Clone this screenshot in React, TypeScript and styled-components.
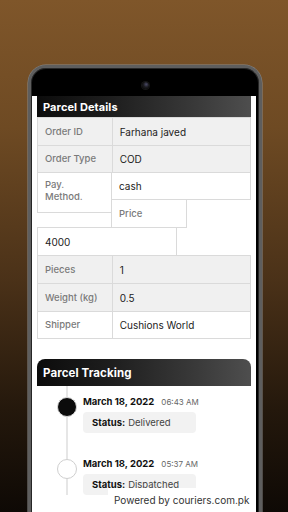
import React from "react";
import styled, { createGlobalStyle } from "styled-components";

const GlobalStyle = createGlobalStyle`
  html, body { margin: 0; padding: 0; }
  body { width: 288px; height: 512px; overflow: hidden; font-family: Inter, "Noto Sans", "DejaVu Sans", sans-serif; }
  * { box-sizing: border-box; }
`;

const Page = styled.div`
  position: relative;
  width: 288px;
  height: 512px;
  overflow: hidden;
  background: linear-gradient(180deg, #7f562a 0%, #6e4a23 25%, #4a3118 55%, #24180c 80%, #0e0905 100%);
  padding: 65px 26px 0 28px;
`;

const Phone = styled.div`
  position: relative;
  width: 234px;
  height: 470px;
  background: #000;
  border: 3px solid #5e5e5e;
  border-bottom: none;
  border-radius: 18px 18px 0 0;
  box-shadow: inset 0 0 0 1px #262626, 0 0 0 0.5px #8a8a8a;
  padding: 0 3px 0 1px;
  overflow: hidden;
`;

const SpeakerSlot = styled.div`
  position: absolute;
  top: -3px;
  left: 82px;
  width: 62px;
  height: 2px;
  border-radius: 1px;
  background: #353535;
`;

const StatusBar = styled.div`
  height: 28px;
  display: flex;
  align-items: flex-start;
  justify-content: center;
  padding: 14px 0 0 2px;
`;

const Camera = styled.div`
  width: 7px;
  height: 7px;
  border-radius: 50%;
  background: radial-gradient(circle at 60% 35%, #4a4a66 0%, #1a1a1e 45%, #0a0a0a 100%);
  box-shadow: 0 0 0 1px #161616;
`;

const Screen = styled.div`
  position: relative;
  height: 416px;
  background: #fff;
  padding: 0 5px;
  overflow: hidden;
`;

const SectionHeader = styled.div<{ $rounded?: boolean }>`
  height: ${(p) => (p.$rounded ? 27 : 21)}px;
  display: flex;
  align-items: center;
  padding-left: 6px;
  color: #fff;
  font-weight: 700;
  font-size: ${(p) => (p.$rounded ? 11.5 : 11)}px;
  letter-spacing: 0.1px;
  background: linear-gradient(90deg, #0c0c0c 0%, #1e1e1e 35%, #3a3a3a 75%, #4e4e4e 100%);
  border-radius: ${(p) => (p.$rounded ? "8px 8px 0 0" : "0")};
`;

const Table = styled.div`
  padding: 1px 0 0 1px;
`;

const Row = styled.div`
  display: flex;
  align-items: flex-start;
`;

const Column = styled.div`
  display: flex;
  flex-direction: column;
`;

const Cell = styled.div<{ $w: number; $h: number; $shade?: boolean; $label?: boolean; $top?: boolean }>`
  width: ${(p) => p.$w}px;
  height: ${(p) => p.$h}px;
  margin: -1px 0 0 -1px;
  border: 1px solid #dadada;
  background: ${(p) => (p.$shade ? "#f0f0f0" : "#fff")};
  display: flex;
  align-items: ${(p) => (p.$top ? "flex-start" : "center")};
  padding: ${(p) => (p.$top ? "6px 7px 0" : "0 7px")};
  font-size: ${(p) => (p.$label ? 9.5 : 10)}px;
  line-height: 12px;
  color: ${(p) => (p.$label ? "#7a7a7a" : "#222")};
  font-weight: ${(p) => (p.$label ? 500 : 400)};
`;

const TrackingSection = styled.div`
  margin-top: 20px;
`;

const Timeline = styled.div`
  position: relative;
  padding-top: 10px;
  &::before {
    content: "";
    position: absolute;
    left: 29px;
    top: 0;
    bottom: 0;
    width: 1.5px;
    background: #e6e6e6;
  }
`;

const Item = styled.div`
  position: relative;
  display: grid;
  grid-template-columns: 46px 1fr;
  margin-bottom: 25px;
`;

const Dot = styled.div<{ $filled?: boolean }>`
  margin: 1px 0 0 20px;
  width: 20px;
  height: 20px;
  border-radius: 50%;
  background: ${(p) => (p.$filled ? "#0b0b0b" : "#fff")};
  border: 1px solid ${(p) => (p.$filled ? "#d8d8d8" : "#cfcfcf")};
`;

const Info = styled.div`
  display: flex;
  flex-direction: column;
  gap: 4px;
`;

const DateLine = styled.div`
  display: flex;
  align-items: baseline;
  gap: 7px;
  line-height: 12px;
  height: 12px;
`;

const DateText = styled.span`
  font-size: 9.5px;
  font-weight: 700;
  color: #111;
`;

const TimeText = styled.span`
  font-size: 8px;
  color: #666;
`;

const StatusBox = styled.div`
  width: 113px;
  height: 21px;
  border-radius: 4px;
  background: #f2f2f2;
  display: flex;
  align-items: center;
  padding: 0 9px;
  font-size: 9.5px;
  color: #444;
  gap: 3px;
`;

const StatusKey = styled.span`
  font-weight: 700;
  color: #111;
`;

const Powered = styled.div`
  position: absolute;
  right: 0;
  bottom: 0;
  width: 148px;
  height: 24px;
  background: #fff;
  padding: 6px 0 0 6px;
  font-size: 10px;
  line-height: 12px;
  color: #333;
  white-space: nowrap;
`;

const rows1 = [
  { label: "Order ID", value: "Farhana javed", h: 28 },
  { label: "Order Type", value: "COD", h: 27 },
];
const rows2 = [
  { label: "Pieces", value: "1", h: 28, shade: true },
  { label: "Weight (kg)", value: "0.5", h: 28, shade: true },
  { label: "Shipper", value: "Cushions World", h: 27, shade: false },
];

const events = [
  { date: "March 18, 2022", time: "06:43 AM", status: "Delivered", filled: true },
  { date: "March 18, 2022", time: "05:37 AM", status: "Dispatched", filled: false },
];

export default function App() {
  return (
    <>
      <GlobalStyle />
      <Page>
        <Phone>
          <SpeakerSlot />
          <StatusBar>
            <Camera />
          </StatusBar>
          <Screen>
            <SectionHeader>Parcel Details</SectionHeader>
            <Table>
              {rows1.map((r) => (
                <Row key={r.label}>
                  <Cell $w={76} $h={r.h + 1} $shade $label>{r.label}</Cell>
                  <Cell $w={140} $h={r.h + 1} $shade>{r.value}</Cell>
                </Row>
              ))}
              <Row>
                <Cell $w={76} $h={41} $label $top>Pay.<br />Method.</Cell>
                <Column>
                  <Cell $w={140} $h={28}>cash</Cell>
                  <Cell $w={76} $h={29} $label>Price</Cell>
                </Column>
              </Row>
              <Row>
                <Cell $w={140} $h={29}>4000</Cell>
              </Row>
              {rows2.map((r) => (
                <Row key={r.label}>
                  <Cell $w={76} $h={r.h + 1} $shade={r.shade} $label>{r.label}</Cell>
                  <Cell $w={140} $h={r.h + 1} $shade={r.shade}>{r.value}</Cell>
                </Row>
              ))}
            </Table>
            <TrackingSection>
              <SectionHeader $rounded>Parcel Tracking</SectionHeader>
              <Timeline>
                {events.map((e, i) => (
                  <Item key={i}>
                    <Dot $filled={e.filled} />
                    <Info>
                      <DateLine>
                        <DateText>{e.date}</DateText>
                        <TimeText>{e.time}</TimeText>
                      </DateLine>
                      <StatusBox>
                        <StatusKey>Status:</StatusKey>
                        <span>{e.status}</span>
                      </StatusBox>
                    </Info>
                  </Item>
                ))}
              </Timeline>
            </TrackingSection>
            <Powered>Powered by couriers.com.pk</Powered>
          </Screen>
        </Phone>
      </Page>
    </>
  );
}
